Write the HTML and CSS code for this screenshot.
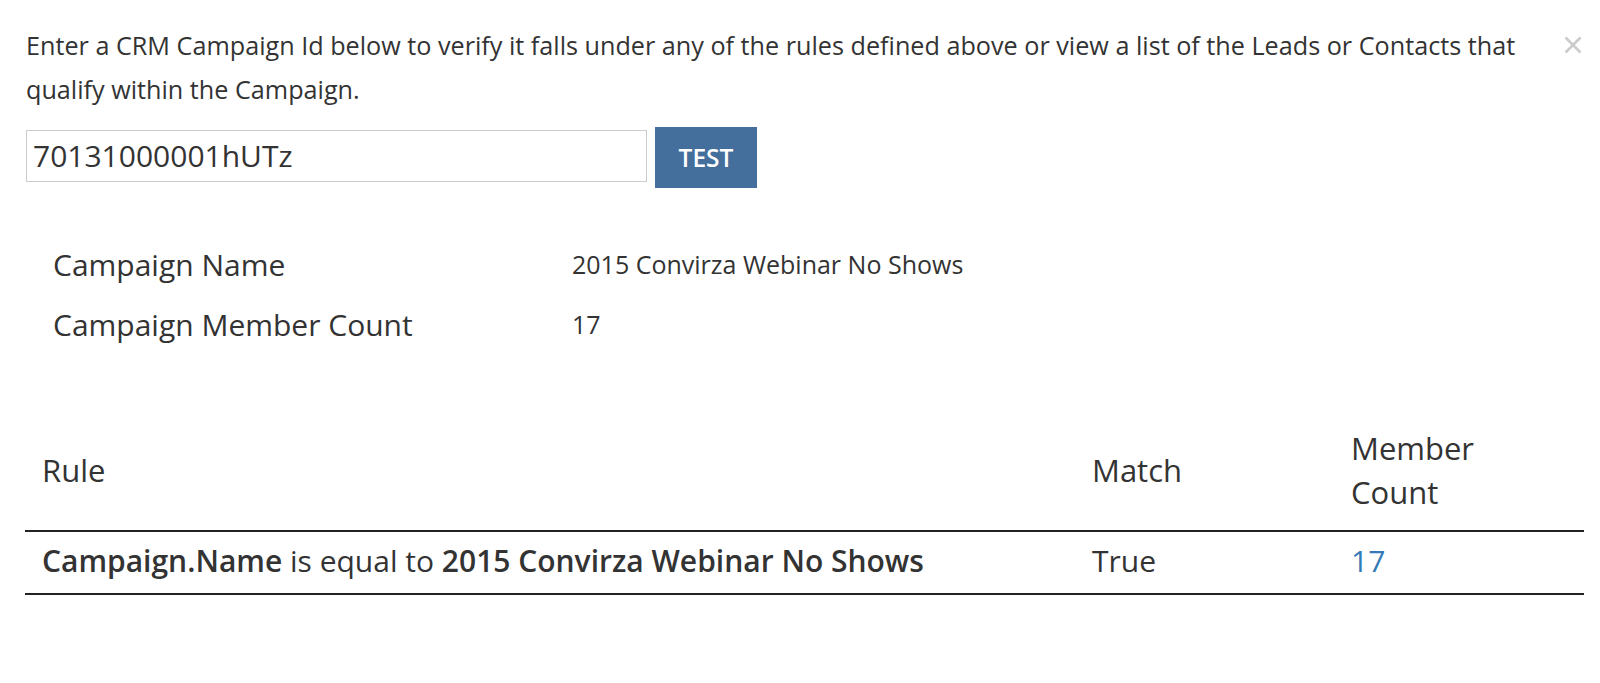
FILE: index.html
```html
<!DOCTYPE html>
<html>
<head>
<meta charset="utf-8">
<link rel="stylesheet" href="styles.css">
</head>
<body>
<div class="modal">
  <div class="top">
    <p class="intro">Enter a CRM Campaign Id below to verify it falls under any of the rules defined above or view a list of the Leads or Contacts that qualify within the Campaign.</p>
    <span class="close" aria-label="Close"><svg class="close-icon" viewBox="0 0 18 18" width="18" height="18"><path d="M1.5 1.5 L16.5 16.5 M16.5 1.5 L1.5 16.5" stroke="#cbcbcb" stroke-width="2.6" stroke-linecap="butt" fill="none"/></svg></span>
  </div>
  <div class="form">
    <div class="input">70131000001hUTz</div>
    <button class="btn">TEST</button>
  </div>
  <div class="details">
    <div class="drow"><div class="dlabel">Campaign Name</div><div class="dvalue">2015 Convirza Webinar No Shows</div></div>
    <div class="drow"><div class="dlabel">Campaign Member Count</div><div class="dvalue">17</div></div>
  </div>
  <table class="rules">
    <thead>
      <tr><th class="c-rule">Rule</th><th class="c-match">Match</th><th class="c-count">Member<br>Count</th></tr>
    </thead>
    <tbody>
      <tr><td class="c-rule"><b>Campaign.Name</b> is equal to <b>2015 Convirza Webinar No Shows</b></td><td class="c-match">True</td><td class="c-count"><a class="link">17</a></td></tr>
    </tbody>
  </table>
</div>
</body>
</html>
```
FILE: styles.css
```css
* { box-sizing: border-box; }
body { margin: 0; background: #fff; color: #333; font-family: "Open Sans", "Noto Sans", sans-serif; }
.modal { padding: 23px 16px 0 26px; }
.top { display: flex; align-items: flex-start; }
.intro { margin: 0; font-size: 25.2px; line-height: 44px; width: 1525px; }
.close { margin-left: auto; margin-right: 2px; margin-top: 13px; display: flex; }
.close-icon { display: block; }
.form { display: flex; align-items: flex-start; gap: 8px; margin-top: 16px; }
.input { width: 621px; height: 52px; margin-top: 3px; border: 1px solid #ccc; font-size: 30px; line-height: 50px; padding: 0 6px; color: #333; }
.btn { width: 102px; height: 61px; border: 0; background: #446e9b; color: #fff; font-family: inherit; font-size: 24.5px; font-weight: 600; padding: 0; }
.details { margin-top: 54px; padding-left: 27px; display: flex; flex-direction: column; gap: 16px; }
.drow { display: flex; align-items: center; height: 44px; }
.dlabel { width: 519px; font-size: 30px; }
.dvalue { font-size: 25px; }
.rules { margin-top: 64px; margin-left: -1px; width: 1559px; border-collapse: collapse; }
.rules th { text-align: left; font-weight: 400; font-size: 31px; line-height: 44px; padding: 16px; border-bottom: 2px solid #222; vertical-align: middle; }
.rules td { font-size: 30px; line-height: 44px; padding: 7px 16px 10px; border-bottom: 2px solid #222; }
.rules b { font-weight: 600; }
.rules .c-rule { padding-left: 17px; width: 1051px; }
.rules .c-match { width: 259px; }
.link { color: #337ab7; }
```
